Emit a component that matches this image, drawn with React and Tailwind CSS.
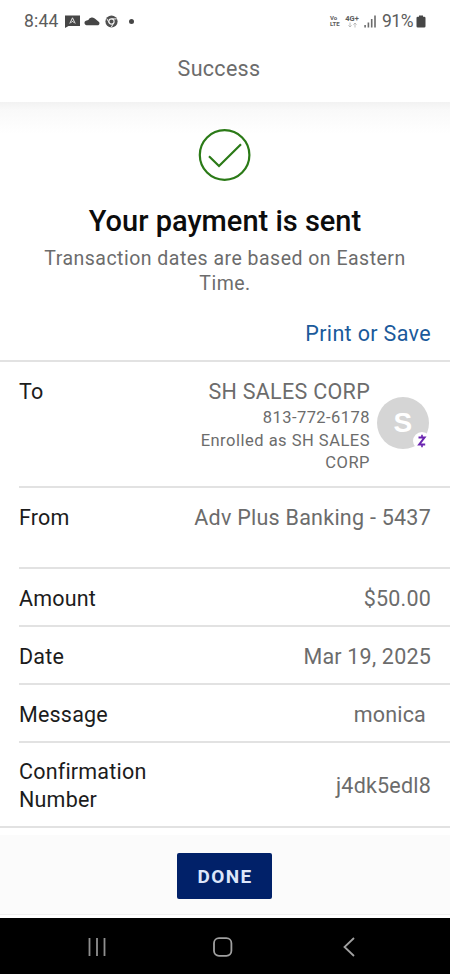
import React from 'react';

const details = [
  { label: 'Amount', value: '$50.00' },
  { label: 'Date', value: 'Mar 19, 2025' },
  { label: 'Message', value: 'monica', valueClass: 'pr-[5px]' },
];

const StatusBar = () => (
  <div className="flex h-[42px] items-center justify-between pl-[24px] pr-[24px] text-[#5c5c5c]">
    <div className="flex items-center">
      <span className="w-[41px] pt-px text-[17.5px] tracking-[0.2px]">8:44</span>
      <svg width="15" height="13" viewBox="0 0 15 13">
        <path d="M0 0.5h15v10.5H3.5L0 13z" fill="#464646" />
        <path d="M4.8 8.5L7.5 2.8l2.7 5.7M6.3 7.6l1.2-1.4 1.2 1.4" fill="none" stroke="#e8e8e8" strokeWidth="1" />
      </svg>
      <svg className="ml-[4px]" width="16" height="10" viewBox="0 0 16 10">
        <path d="M2.4 9.2a2.3 2.3 0 0 1-.5-4.4l2.4-.9A4.2 4.2 0 0 1 11.4 3l3 2.4A2.1 2.1 0 0 1 14.2 9.2z" fill="#464646" />
      </svg>
      <svg className="ml-[5px]" width="13" height="13" viewBox="0 0 13 13">
        <circle cx="6.5" cy="6.5" r="6.1" fill="#505050" />
        <circle cx="6.5" cy="6.5" r="2.6" fill="none" stroke="#f2f2f2" strokeWidth="1.1" />
        <path d="M6.5 3.9h5M4.2 7.8L1.8 3.7M8.7 7.8l-2.4 4.4" stroke="#f2f2f2" strokeWidth="1" />
      </svg>
      <span className="ml-[11px] size-[5px] rounded-full bg-[#464646]" />
    </div>
    <div className="flex items-center">
      <div className="flex w-[15px] flex-col text-[6px] font-bold leading-[6px]">
        <span>Vo</span>
        <span>LTE</span>
      </div>
      <div className="mr-[5px] flex w-[14px] flex-col items-center text-[7.5px] font-bold leading-[7px]">
        <span>4G+</span>
        <svg width="9" height="6" viewBox="0 0 9 6" fill="none" strokeWidth="0.9">
          <path d="M2 0.5v4.5M0.4 3.4L2 5l1.6-1.6" stroke="#b5b5b5" />
          <path d="M7 5.5V1M5.4 2.6L7 1l1.6 1.6" stroke="#b5b5b5" />
        </svg>
      </div>
      <svg width="13" height="13" viewBox="0 0 13 13" fill="#6c6c6c">
        <rect x="0.3" y="10" width="1.6" height="2.5" />
        <rect x="3.6" y="7.5" width="1.6" height="5" />
        <rect x="6.9" y="4" width="1.6" height="8.5" />
        <rect x="10.2" y="0.5" width="1.6" height="12" />
      </svg>
      <span className="ml-[5px] pt-px text-[17.5px] tracking-[-0.5px]">91%</span>
      <svg className="ml-[3px]" width="10" height="13" viewBox="0 0 10 13">
        <path d="M3 0.5h4v1.3h1.2a1.3 1.3 0 0 1 1.3 1.3v8.1a1.3 1.3 0 0 1-1.3 1.3H1.8a1.3 1.3 0 0 1-1.3-1.3V3.1a1.3 1.3 0 0 1 1.3-1.3H3z" fill="#464646" />
      </svg>
    </div>
  </div>
);

const Avatar = () => (
  <div className="relative ml-[7px] mt-[35px] flex size-[52px] shrink-0 items-center justify-center rounded-full bg-[#d5d5d5] font-['Liberation_Sans',sans-serif] text-[28px] font-bold text-white">
    S
    <span className="absolute -right-[2px] -bottom-px flex size-[18px] items-center justify-center rounded-full bg-white">
      <svg width="10" height="14" viewBox="0 0 10 14" fill="none" stroke="#6a24b0" strokeWidth="2">
        <path d="M1.5 3.5h6L2.2 10.4h6" />
        <path d="M5 0.8v2.7M5 10.4v2.8" strokeWidth="1.6" />
      </svg>
    </span>
  </div>
);

const NavBar = () => (
  <div className="flex h-[56px] items-center bg-black pt-px">
    <svg className="ml-[87px]" width="20" height="20" viewBox="0 0 20 20" stroke="#8f8f8f" strokeWidth="1.8">
      <path d="M2.5 1v18M10 1v18M17.5 1v18" />
    </svg>
    <svg className="ml-[106px]" width="20" height="20" viewBox="0 0 20 20" fill="none" stroke="#a0a0a0" strokeWidth="1.8">
      <rect x="1" y="1.2" width="17.4" height="17.6" rx="5" />
    </svg>
    <svg className="ml-[107px]" width="20" height="20" viewBox="0 0 20 20" fill="none" stroke="#a0a0a0" strokeWidth="1.8">
      <path d="M14 1L4.5 10l9.5 9" />
    </svg>
  </div>
);

export default function App() {
  return (
    <div className="flex h-[974px] w-[450px] flex-col overflow-hidden bg-white font-[Roboto,sans-serif] text-[#6c6c6c]">
      <StatusBar />
      <header className="flex h-[60px] items-start justify-center pr-[12px] pt-[13px] text-[21.5px] leading-[28px] tracking-[0.3px]">
        Success
      </header>

      <section className="flex h-[258px] flex-col items-center bg-linear-to-b from-[#f2f2f2] via-[#f9f9f9] via-[8px] to-white to-[32px] pt-[26px]">
        <svg width="54" height="54" viewBox="0 0 54 54" fill="none" stroke="#2b7a17" strokeWidth="2.2">
          <circle cx="26.6" cy="27" r="24.8" />
          <path d="M11 28.3L21 38 43 16.2" />
        </svg>
        <h1 className="mt-[20px] text-[29px] font-medium leading-[38px] text-[#0c0c0c]">Your payment is sent</h1>
        <p className="mt-[6px] w-[390px] text-center text-[19.5px] leading-[25px] tracking-[0.48px]">
          Transaction dates are based on Eastern Time.
        </p>
        <a className="mt-[24px] self-end pr-[19px] text-[21.5px] leading-[28px] tracking-[0.35px] text-[#1a5a9b]">Print or Save</a>
      </section>

      <main className="flex h-[468px] flex-col border-y-2 border-[#e2e2e2] pl-[19px] text-[21.5px] leading-[28px] tracking-[0.2px]">
        <div className="flex h-[126px] justify-between border-b-2 border-[#e2e2e2] pr-[21px]">
          <span className="pt-[16px] text-[#1c1c1c]">To</span>
          <div className="flex">
            <div className="w-[190px] pt-[16px] text-right">
              <div className="tracking-[0.3px]">SH SALES CORP</div>
              <div className="text-[16.5px] leading-[23px] tracking-[0.45px]">813-772-6178</div>
              <div className="pt-px text-[16.5px] leading-[22px] tracking-[0.5px]">Enrolled as SH SALES CORP</div>
            </div>
            <Avatar />
          </div>
        </div>
        <div className="flex h-[81px] justify-between border-b-2 border-[#e2e2e2] pr-[19px] pt-[16px]">
          <span className="text-[#1c1c1c]">From</span>
          <span className="tracking-[0.25px]">Adv Plus Banking - 5437</span>
        </div>
        {details.map(({ label, value, valueClass }) => (
          <div key={label} className="flex h-[58px] items-center justify-between border-b-2 border-[#e2e2e2] pr-[19px] pt-[4px]">
            <span className="text-[#1c1c1c]">{label}</span>
            <span className={valueClass}>{value}</span>
          </div>
        ))}
        <div className="flex flex-1 items-center justify-between pr-[19px] pt-[3px]">
          <span className="w-[140px] text-[#1c1c1c]">Confirmation Number</span>
          <span>j4dk5edl8</span>
        </div>
      </main>

      <footer className="mt-[7px] flex h-[80px] items-start justify-center border-b border-[#efefef] bg-[#fbfbfb] pr-[2px] pt-[18px]">
        <button className="h-[46px] w-[95px] rounded-[2px] bg-[#012169] pl-[2px] pt-[2px] text-[19px] font-bold tracking-[1.4px] text-[#dde6fa]">
          DONE
        </button>
      </footer>
      <div className="h-[3px] shrink-0 bg-white" />
      <NavBar />
    </div>
  );
}
